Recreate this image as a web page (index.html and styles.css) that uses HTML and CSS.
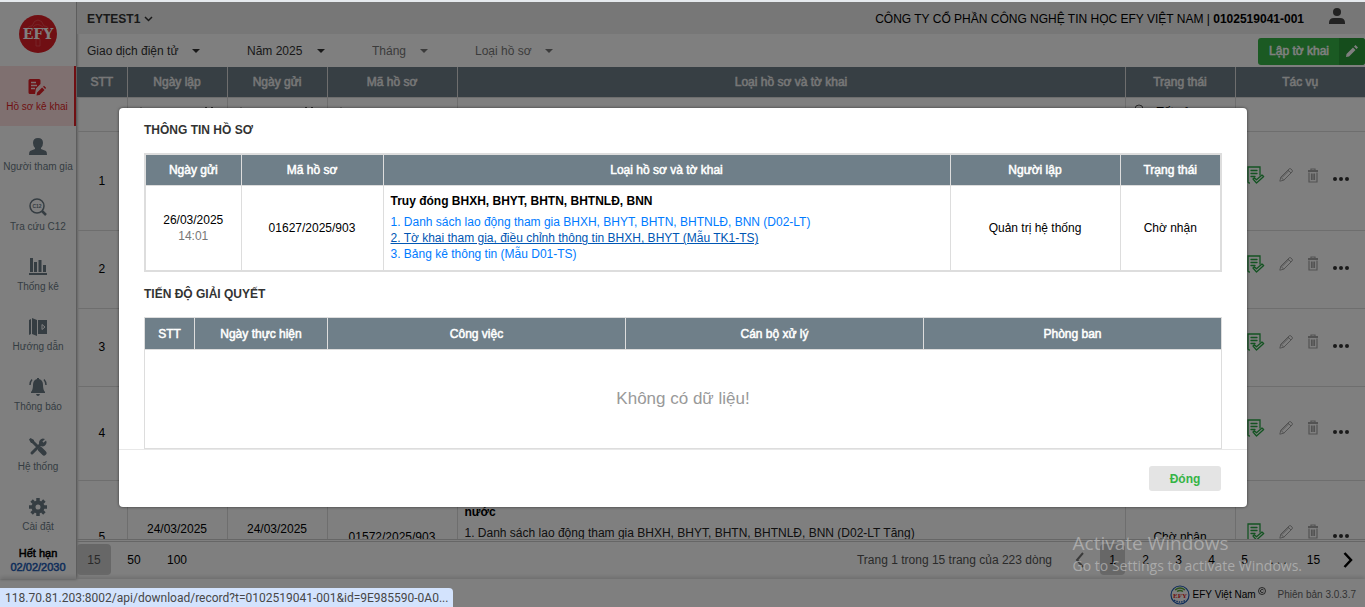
FILE: index.html
```html
<!DOCTYPE html>
<html lang="vi">
  <head>
    <meta charset="UTF-8" />
    <meta name="viewport" content="width=device-width, initial-scale=1.0" />
    <title>EFY - Hồ sơ kê khai</title>
    <link rel="stylesheet" href="styles.css">
  </head>
  <body>
    <!-- Icon dùng chung -->
    <svg class="sprite" aria-hidden="true">
      <symbol id="i-caret" viewBox="0 0 8 4"><path d="M0 0h8L4 4z" fill="currentColor" /></symbol>
      <symbol id="i-doc" viewBox="0 0 18 18">
        <g fill="none" stroke="#28a745" stroke-width="1.300" stroke-linecap="round">
          <path d="M2.500 17Q1 17 1 15.500V1h12v8M4 4.500h6M4 7.500h6M4 10.500h4" />
          <path d="M6 13l1.300-1.300 2.200 2 5.500-4.700 1.700 1.400L9.500 17z" stroke-linejoin="round" />
        </g>
      </symbol>
      <symbol id="i-pencil" viewBox="0 0 14 14">
        <g fill="none" stroke="#a6a6a6" stroke-width="1"><path d="M.8 13.200l1-4L10 1q1-1 2 0l1 1q1 1 0 2L4.800 12.200zM9 2l3 3M3 9.500L9.500 3M1.800 9.200l3 3" /></g>
      </symbol>
      <symbol id="i-trash" viewBox="0 0 12 15">
        <g fill="none" stroke="#a6a6a6" stroke-width="1.200"><path d="M4 2.500V1h4v1.500M2 4.500V14h8V4.500M4.500 5.500V12M6 5.500V12M7.500 5.500V12" /></g>
        <path d="M1 2h10v2H1z" fill="#a6a6a6" />
      </symbol>
      <symbol id="i-dots" viewBox="0 0 16 4">
        <g fill="#333"><circle cx="2" cy="2" r="2" /><circle cx="8" cy="2" r="2" /><circle cx="14" cy="2" r="2" /></g>
      </symbol>
      <symbol id="i-search" viewBox="0 0 12 12"><path d="M8 8l3 3" stroke="#555" /><circle cx="5" cy="5" r="4" fill="none" stroke="#555" /></symbol>
      <symbol id="i-calendar" viewBox="0 0 12 12"><path d="M1 3h10v8H1zM1 5h10M3 0v3M9 0v3" fill="none" stroke="#222" stroke-width="1.500" /></symbol>
    </svg>

    <div class="app">
      <aside class="sidebar">
        <div class="logo">
          <svg width="38" height="38" viewBox="0 0 38 38">
            <circle cx="19" cy="19" r="19" fill="#e11f26" />
            <path d="M17 24h4v7h-4zM11 23q-5-2-3-7 0-5 5-5 2-6 6-6t6 6q5 0 5 5 2 5-3 7M14 12q4-5 10 0" fill="none" stroke="#f4666b" stroke-width=".6" />
            <text x="19" y="24" text-anchor="middle" class="logo-text">EFY</text>
          </svg>
        </div>
        <nav>
          <a href="#" class="active">
            <svg width="18" height="18" viewBox="0 0 18 18">
              <path d="M2 1h9q1.500 0 1.500 1.500V6L8 10.500 7 16H2Q.5 16 .5 14.500v-12Q.5 1 2 1z" fill="currentColor" />
              <path d="M3 4.500h5M3 7.500h6M3 10.500h4" stroke="#ffe0e0" stroke-width="1.300" />
              <path d="M8.500 17.500l.6-3 5-5 2.400 2.400-5 5zM15 8.700l1-1 2.200 2.200-1 1z" fill="currentColor" />
            </svg>
            <span>Hồ sơ kê khai</span>
          </a>
          <a href="#">
            <svg width="18" height="18" viewBox="0 0 18 18">
              <path d="M9 0q5 0 5 5 0 3-2 5v1l5 2q1 1 1 4H0q0-3 1-4l5-2v-1Q4 8 4 5q0-5 5-5z" fill="currentColor" />
            </svg>
            <span>Người tham gia</span>
          </a>
          <a href="#">
            <svg width="18" height="18" viewBox="0 0 18 18">
              <circle cx="8" cy="8" r="7" fill="none" stroke="currentColor" stroke-width="1.500" />
              <path d="M13 13l4 4" stroke="currentColor" stroke-width="2.500" />
              <text x="8" y="10" text-anchor="middle" class="c12">C12</text>
            </svg>
            <span>Tra cứu C12</span>
          </a>
          <a href="#">
            <svg width="18" height="18" viewBox="0 0 18 18">
              <path d="M1 0h3v14H1zM5 4h3v10H5zM9.500 2h3v12h-3zM14 7h3v7h-3zM0 15h18v2H0z" fill="currentColor" />
            </svg>
            <span>Thống kê</span>
          </a>
          <a href="#">
            <svg width="18" height="18" viewBox="0 0 18 18">
              <path d="M0 2l2-1v15l-2 1zM3 0l5 2v16l-5-2zM9 2h9v14H9z" fill="currentColor" />
              <path d="M13 6.500l3 2.500-3 2.500z" fill="none" stroke="#fff" />
            </svg>
            <span>Hướng dẫn</span>
          </a>
          <a href="#">
            <svg width="18" height="18" viewBox="0 0 18 18">
              <path d="M8 0h2v1q4 1 4 6 0 5 2 7v1H2v-1q2-2 2-7 0-5 4-6zM7 16h4q-.5 2-2 2t-2-2z" fill="currentColor" />
              <path d="M3 1.500Q.8 4 1 7M15 1.500Q17.200 4 17 7" fill="none" stroke="currentColor" stroke-width="1.500" />
            </svg>
            <span>Thông báo</span>
          </a>
          <a href="#">
            <svg width="18" height="18" viewBox="0 0 18 18">
              <path d="M3 15L13 5M3 3l5 5" stroke="currentColor" stroke-width="3" stroke-linecap="round" />
              <path d="M11.500 11.500l3.500 3.500" stroke="currentColor" stroke-width="5" stroke-linecap="round" />
              <path d="M0 1.500L1.500 0 5 2v2L4 5 2 5zM16 1l-3 3 1 1 3-2.500q1.500 3-1 5t-5 0q-2-3 0-5.500t5-1z" fill="currentColor" />
            </svg>
            <span>Hệ thống</span>
          </a>
          <a href="#">
            <svg width="18" height="18" viewBox="0 0 18 18">
              <circle cx="9" cy="9" r="4.500" fill="none" stroke="currentColor" stroke-width="4" />
              <path d="M9 0v3M9 15v3M0 9h3M15 9h3M2.600 2.600l2.200 2.200M13.200 13.200l2.200 2.200M2.600 15.400l2.200-2.200M13.200 4.800l2.200-2.200" stroke="currentColor" stroke-width="3.500" />
            </svg>
            <span>Cài đặt</span>
          </a>
        </nav>
        <div class="expire">
          <div>Hết hạn</div>
          <b>02/02/2030</b>
        </div>
      </aside>

      <main>
        <header class="topbar">
          <button class="account">EYTEST1
            <svg width="9" height="6" viewBox="0 0 9 6"><path d="M1 1l3.500 3.500L8 1" fill="none" stroke="#333" stroke-width="1.500" /></svg>
          </button>
          <div class="company">CÔNG TY CỔ PHẦN CÔNG NGHỆ TIN HỌC EFY VIỆT NAM | <b>0102519041-001</b></div>
          <button class="user" aria-label="Tài khoản">
            <svg width="16" height="18" viewBox="0 0 16 18"><circle cx="8" cy="4" r="4" fill="#444" /><path d="M0 16v-1q0-5 5-5h6q5 0 5 5v1z" fill="#444" /></svg>
          </button>
        </header>

        <div class="filters">
          <label class="filter type"><select aria-label="Hình thức"><option>Giao dịch điện tử</option></select><svg width="8" height="4"><use href="#i-caret" /></svg></label>
          <label class="filter year"><select aria-label="Năm"><option>Năm 2025</option></select><svg width="8" height="4"><use href="#i-caret" /></svg></label>
          <label class="filter month muted"><select aria-label="Tháng"><option>Tháng</option></select><svg width="8" height="4"><use href="#i-caret" /></svg></label>
          <label class="filter kind muted"><select aria-label="Loại hồ sơ"><option>Loại hồ sơ</option></select><svg width="8" height="4"><use href="#i-caret" /></svg></label>
          <button class="create">
            <span>Lập tờ khai</span>
            <span class="create-icon"><svg width="12" height="12" viewBox="0 0 12 12"><path d="M0 12l.5-3L7 2.500 9.500 5 3 11.500zM8 1.500L9.500 0 12 2.500 10.500 4z" fill="#fff" /></svg></span>
          </button>
        </div>

        <div class="list">
          <table>
            <colgroup><col class="w50"><col class="w100"><col class="w100"><col class="w130"><col><col class="w110"><col class="w130"></colgroup>
            <thead>
              <tr><th>STT</th><th>Ngày lập</th><th>Ngày gửi</th><th>Mã hồ sơ</th><th>Loại hồ sơ và tờ khai</th><th>Trạng thái</th><th>Tác vụ</th></tr>
            </thead>
            <tbody id="records">
              <tr class="search">
                <td></td>
                <td><div class="find"><svg width="12" height="12"><use href="#i-search" /></svg><svg width="12" height="12"><use href="#i-calendar" /></svg></div></td>
                <td><div class="find"><svg width="12" height="12"><use href="#i-search" /></svg><svg width="12" height="12"><use href="#i-calendar" /></svg></div></td>
                <td><div class="find"><svg width="12" height="12"><use href="#i-search" /></svg></div></td>
                <td></td>
                <td><div class="find status"><svg width="12" height="12"><use href="#i-search" /></svg><span>Tất cả</span></div></td>
                <td></td>
              </tr>
            </tbody>
          </table>
        </div>

        <div class="pager">
          <div class="sizes">
            <button class="current">15</button><button>50</button><button>100</button>
          </div>
          <span class="summary">Trang 1 trong 15 trang của 223 dòng</span>
          <div class="pages">
            <button aria-label="Trang trước"><svg width="10" height="16" viewBox="0 0 10 16"><path d="M8 1L2 8l6 7" fill="none" stroke="#777" stroke-width="2" /></svg></button>
            <button class="current">1</button>
            <button>2</button>
            <button>3</button>
            <button>4</button>
            <button>5</button>
            <span>. . .</span>
            <button class="last">15</button>
            <button aria-label="Trang sau"><svg width="10" height="16" viewBox="0 0 10 16"><path d="M1.500 1l6.500 7-6.500 7" fill="none" stroke="#000" stroke-width="2.500" /></svg></button>
          </div>
        </div>
      </main>
    </div>

    <footer>
      <svg width="20" height="20" viewBox="0 0 20 20">
        <circle cx="10" cy="10" r="9" fill="#fff" stroke="#1d5bb5" stroke-width="1.200" />
        <path d="M5 5q5-4 10 0M7 6.500q3-2 6 0" fill="none" stroke="#57a639" stroke-width="1.500" />
        <path d="M4 15q6 4 12 0" fill="none" stroke="#1d5bb5" stroke-width="1.500" stroke-dasharray="1.500 1" />
        <text x="10" y="13" text-anchor="middle" class="mini-logo">EFY</text>
      </svg>
      <span class="brand">EFY Việt Nam</span>
      <svg class="copy" width="8" height="8" viewBox="0 0 8 8"><circle cx="4" cy="4" r="3.500" fill="none" stroke="#222" stroke-width=".8" /><path d="M5.500 3q-1.500-1.300-2.700 0-.8 1 0 2 1.200 1.300 2.700 0" fill="none" stroke="#222" stroke-width=".8" /></svg>
      <span class="version">Phiên bản 3.0.3.7</span>
    </footer>

    <!-- Hộp thoại thông tin hồ sơ -->
    <div class="overlay">
      <div class="modal" role="dialog" aria-modal="true" aria-labelledby="modal-title">
        <div class="modal-body">
          <h2 id="modal-title">THÔNG TIN HỒ SƠ</h2>
          <table class="info">
            <colgroup><col class="w96"><col class="w142"><col><col class="w170"><col class="w101"></colgroup>
            <thead>
              <tr><th>Ngày gửi</th><th>Mã hồ sơ</th><th>Loại hồ sơ và tờ khai</th><th>Người lập</th><th>Trạng thái</th></tr>
            </thead>
            <tbody>
              <tr>
                <td>26/03/2025<div class="time">14:01</div></td>
                <td>01627/2025/903</td>
                <td class="forms">
                  <b>Truy đóng BHXH, BHYT, BHTN, BHTNLĐ, BNN</b>
                  <a href="#">1. Danh sách lao động tham gia BHXH, BHYT, BHTN, BHTNLĐ, BNN (D02-LT)</a>
                  <a href="#" class="hovered">2. Tờ khai tham gia, điều chỉnh thông tin BHXH, BHYT (Mẫu TK1-TS)</a>
                  <a href="#">3. Bảng kê thông tin (Mẫu D01-TS)</a>
                </td>
                <td>Quản trị hệ thống</td>
                <td>Chờ nhận</td>
              </tr>
            </tbody>
          </table>

          <h2>TIẾN ĐỘ GIẢI QUYẾT</h2>
          <table class="progress">
            <colgroup><col class="w50"><col class="w133"><col><col><col></colgroup>
            <thead>
              <tr><th>STT</th><th>Ngày thực hiện</th><th>Công việc</th><th>Cán bộ xử lý</th><th>Phòng ban</th></tr>
            </thead>
            <tbody>
              <tr><td colspan="5" class="empty">Không có dữ liệu!</td></tr>
            </tbody>
          </table>
        </div>
        <div class="modal-footer"><button class="close">Đóng</button></div>
      </div>
    </div>

    <div class="watermark">
      <div class="big">Activate Windows</div>
      <div>Go to Settings to activate Windows.</div>
    </div>
    <div class="status-bar">118.70.81.203:8002/api/download/record?t=0102519041-001&amp;id=9E985590-0A0...</div>

    <script>
      // Danh sách hồ sơ
      const records = [
        { size: "tall" },
        { size: "short" },
        { size: "short" },
        { size: "medium" },
        {
          size: "full",
          created: "24/03/2025",
          sent: "24/03/2025",
          code: "01572/2025/903",
          title: "nước",
          form: "1. Danh sách lao động tham gia BHXH, BHYT, BHTN, BHTNLĐ, BNN (D02-LT Tăng)",
          status: "Chờ nhận",
        },
      ];

      const actions = `
        <div class="actions">
          <button aria-label="Xem"><svg width="18" height="18"><use href="#i-doc" /></svg></button>
          <button aria-label="Sửa"><svg width="14" height="14"><use href="#i-pencil" /></svg></button>
          <button aria-label="Xóa"><svg width="12" height="15"><use href="#i-trash" /></svg></button>
          <button aria-label="Thêm" class="more"><svg width="16" height="4"><use href="#i-dots" /></svg></button>
        </div>`;

      document.getElementById("records").insertAdjacentHTML(
        "beforeend",
        records
          .map(
            (r, i) => `
          <tr class="${r.size}">
            <td>${i + 1}</td>
            <td class="date">${r.created || ""}</td>
            <td class="date">${r.sent || ""}</td>
            <td>${r.code || ""}</td>
            <td class="detail"><b>${r.title || ""}</b><div>${r.form || ""}</div></td>
            <td>${r.status || ""}</td>
            <td>${actions}</td>
          </tr>`
          )
          .join("")
      );
    </script>
  </body>
</html>
```
FILE: styles.css
```css
* {
  box-sizing: border-box;
}
body {
  margin: 0;
  height: 100vh;
  display: flex;
  flex-direction: column;
  overflow: hidden;
  position: relative;
  border-top: 2px solid #e6eaee;
  font-family: "Liberation Sans", Arial, sans-serif;
  font-size: 12px;
  line-height: 16px;
  color: #000;
  background: #fff;
}
button {
  border: 0;
  padding: 0;
  background: none;
  font: inherit;
  color: inherit;
  cursor: pointer;
}
a {
  text-decoration: none;
}
svg {
  display: block;
  flex: none;
}
.sprite {
  position: absolute;
  width: 0;
  height: 0;
}
.app {
  flex: 1;
  min-height: 0;
  display: flex;
}

/* Menu trái */
.sidebar {
  width: 77px;
  flex: none;
  display: flex;
  flex-direction: column;
  border-right: 1px solid #bbb;
  box-shadow: 0 0 3px #999;
  text-align: center;
}
.logo {
  height: 64px;
  display: flex;
  align-items: center;
  justify-content: center;
}
.logo-text {
  font: bold 14px "DejaVu Serif", serif;
  fill: #fff;
}
.sidebar nav a {
  height: 60px;
  padding-top: 12px;
  display: flex;
  flex-direction: column;
  align-items: center;
  font-size: 10px;
  line-height: 22px;
  white-space: nowrap;
  color: #6b7a85;
}
.sidebar nav a.active {
  color: #e11f26;
  background: #ffe0e0;
  border-right: 2px solid #e11f26;
}
.c12 {
  font-size: 5px;
  font-weight: bold;
  fill: currentColor;
}
.expire {
  font-size: 11px;
  line-height: 14px;
  -webkit-text-stroke: 0.5px;
}
.expire b {
  font-weight: normal;
  color: #1d5bb5;
}

/* Thanh trên */
main {
  flex: 1;
  min-width: 0;
  display: flex;
  flex-direction: column;
}
.topbar {
  height: 32px;
  padding: 1px 20px 0 10px;
  display: flex;
  align-items: center;
  background: #eee;
}
.account {
  display: flex;
  align-items: center;
  gap: 4px;
  font-weight: bold;
  color: #333;
}
.company {
  margin-left: auto;
}
.user {
  margin-left: 25px;
  padding-bottom: 4px;
}
.filters {
  height: 33px;
  padding: 1px 0 0 10px;
  display: flex;
  align-items: center;
  gap: 47px;
}
.filter {
  position: relative;
  display: flex;
  align-items: center;
  color: #333;
}
.filter select {
  width: 100%;
  appearance: none;
  border: 0;
  padding: 0;
  background: none;
  font: inherit;
  color: inherit;
}
.filter svg {
  position: absolute;
  right: 0;
}
.type {
  width: 113px;
}
.year,
.kind {
  width: 78px;
}
.month {
  width: 56px;
}
.muted {
  color: #777;
}
.create {
  margin-left: auto;
  height: 27px;
  display: flex;
  align-items: center;
  gap: 10px;
  padding-left: 11px;
  border-radius: 3px;
  overflow: hidden;
  -webkit-text-stroke: 0.5px;
  color: #fff;
  background: #36b446;
}
.create-icon {
  width: 26px;
  height: 27px;
  display: flex;
  align-items: center;
  justify-content: center;
  background: #2b9a39;
}

/* Bảng */
table {
  width: 100%;
  table-layout: fixed;
  border-collapse: collapse;
  text-align: center;
}
th {
  height: 31px;
  padding: 0;
  font-weight: normal;
  -webkit-text-stroke: 0.5px;
  color: #fff;
  background: #6f7f89;
  border: 1px solid #ddd;
}
td {
  padding: 0;
  border: 1px solid #ddd;
}
.w50 {
  width: 50px;
}
.w96 {
  width: 96px;
}
.w100 {
  width: 100px;
}
.w101 {
  width: 101px;
}
.w110 {
  width: 110px;
}
.w130 {
  width: 130px;
}
.w133 {
  width: 133px;
}
.w142 {
  width: 142px;
}
.w170 {
  width: 170px;
}
.list {
  flex: 1;
  min-height: 0;
  overflow: hidden;
  border-bottom: 1px solid #ccc;
}
.list table {
  border-style: hidden;
}
.list th {
  height: 30px;
  color: #eee;
}
.search {
  height: 34px;
}
.find {
  display: flex;
  justify-content: space-between;
  padding: 0 12px 2px 8px;
}
.find.status {
  justify-content: flex-start;
  gap: 11px;
  padding-bottom: 4px;
}
.tall {
  height: 99px;
}
.short {
  height: 78px;
}
.medium {
  height: 94px;
}
.full {
  height: 114px;
}
.date {
  padding-bottom: 16px;
}
.detail {
  padding: 23px 7px 0;
  text-align: left;
  vertical-align: top;
  color: #222;
}
.detail b {
  display: block;
  margin-bottom: 5px;
  color: #000;
}
.actions {
  display: flex;
  align-items: center;
  gap: 14px;
  padding: 0 0 11px 11px;
}
.actions .more {
  padding-top: 8px;
}

/* Phân trang */
.pager {
  height: 38px;
  margin-top: 1px;
  padding-bottom: 2px;
  display: flex;
  align-items: center;
  border-top: 1px solid #ccc;
}
.pager button {
  height: 31px;
  border-radius: 4px;
}
.pager .current {
  background: #cfcfcf;
}
.sizes {
  display: flex;
}
.sizes button {
  min-width: 34px;
  padding: 0 10px;
  margin-right: 6px;
}
.sizes .current {
  color: #555;
}
.summary {
  margin-left: auto;
  color: #555;
}
.pages {
  display: flex;
  align-items: center;
  gap: 8px;
  margin: 0 5px 0 15px;
}
.pages > * {
  width: 25px;
  display: flex;
  align-items: center;
  justify-content: center;
}
.pages span,
.pages .last {
  width: 27px;
}

/* Chân trang */
footer {
  height: 28px;
  padding: 4px 9px 0 0;
  display: flex;
  align-items: center;
  justify-content: flex-end;
  font-size: 10px;
  box-shadow: 0 -2px 4px #ddd;
}
.brand {
  margin-left: 3px;
}
.mini-logo {
  font: bold 7px "Liberation Serif", serif;
  fill: #e11f26;
}
.copy {
  margin: 0 12px 8px 2px;
}
.version {
  color: #666;
}

/* Hộp thoại */
.overlay {
  position: absolute;
  inset: 0;
  background: rgba(0, 0, 0, 0.5);
}
.modal {
  margin: 106px 118px 0 119px;
  background: #fff;
  border-radius: 4px;
  box-shadow: 0 0 3px rgba(0, 0, 0, 0.6);
}
.modal-body {
  padding: 14px 25px 0;
}
.modal h2 {
  margin: 0 0 15px;
  font-size: 12px;
  line-height: 16px;
  color: #333;
}
.info {
  margin-bottom: 14px;
  border: 2px solid #ddd;
}
.info td {
  height: 86px;
}
.info .forms {
  padding: 0 7px;
  text-align: left;
}
.forms b {
  display: block;
  margin-bottom: 5px;
}
.forms a {
  display: block;
  color: #007bff;
}
.forms .hovered {
  color: #0056b3;
  text-decoration: underline;
}
.time {
  color: #777;
}
.progress th {
  height: 32px;
}
.progress .empty {
  height: 99px;
  font-size: 17px;
  color: #999;
}
.modal-footer {
  height: 58px;
  padding-right: 26px;
  display: flex;
  align-items: center;
  justify-content: flex-end;
  border-top: 1px solid #e8e8e8;
}
.close {
  width: 72px;
  height: 25px;
  border-radius: 3px;
  font-weight: bold;
  color: #36b446;
  background: #e4e4e4;
}

/* Lớp phủ của hệ điều hành và trình duyệt */
.watermark {
  position: absolute;
  right: 63px;
  bottom: 31px;
  font-family: "Open Sans", sans-serif;
  font-size: 14px;
  line-height: 20px;
  color: rgba(200, 200, 200, 0.6);
  pointer-events: none;
}
.watermark .big {
  font-size: 19px;
  line-height: 26px;
}
.status-bar {
  position: absolute;
  left: 0;
  bottom: 0;
  height: 19px;
  padding: 0 5px;
  border-top-right-radius: 4px;
  font-family: Roboto, sans-serif;
  line-height: 20px;
  color: #474747;
  background: #d3e3fd;
}
```
